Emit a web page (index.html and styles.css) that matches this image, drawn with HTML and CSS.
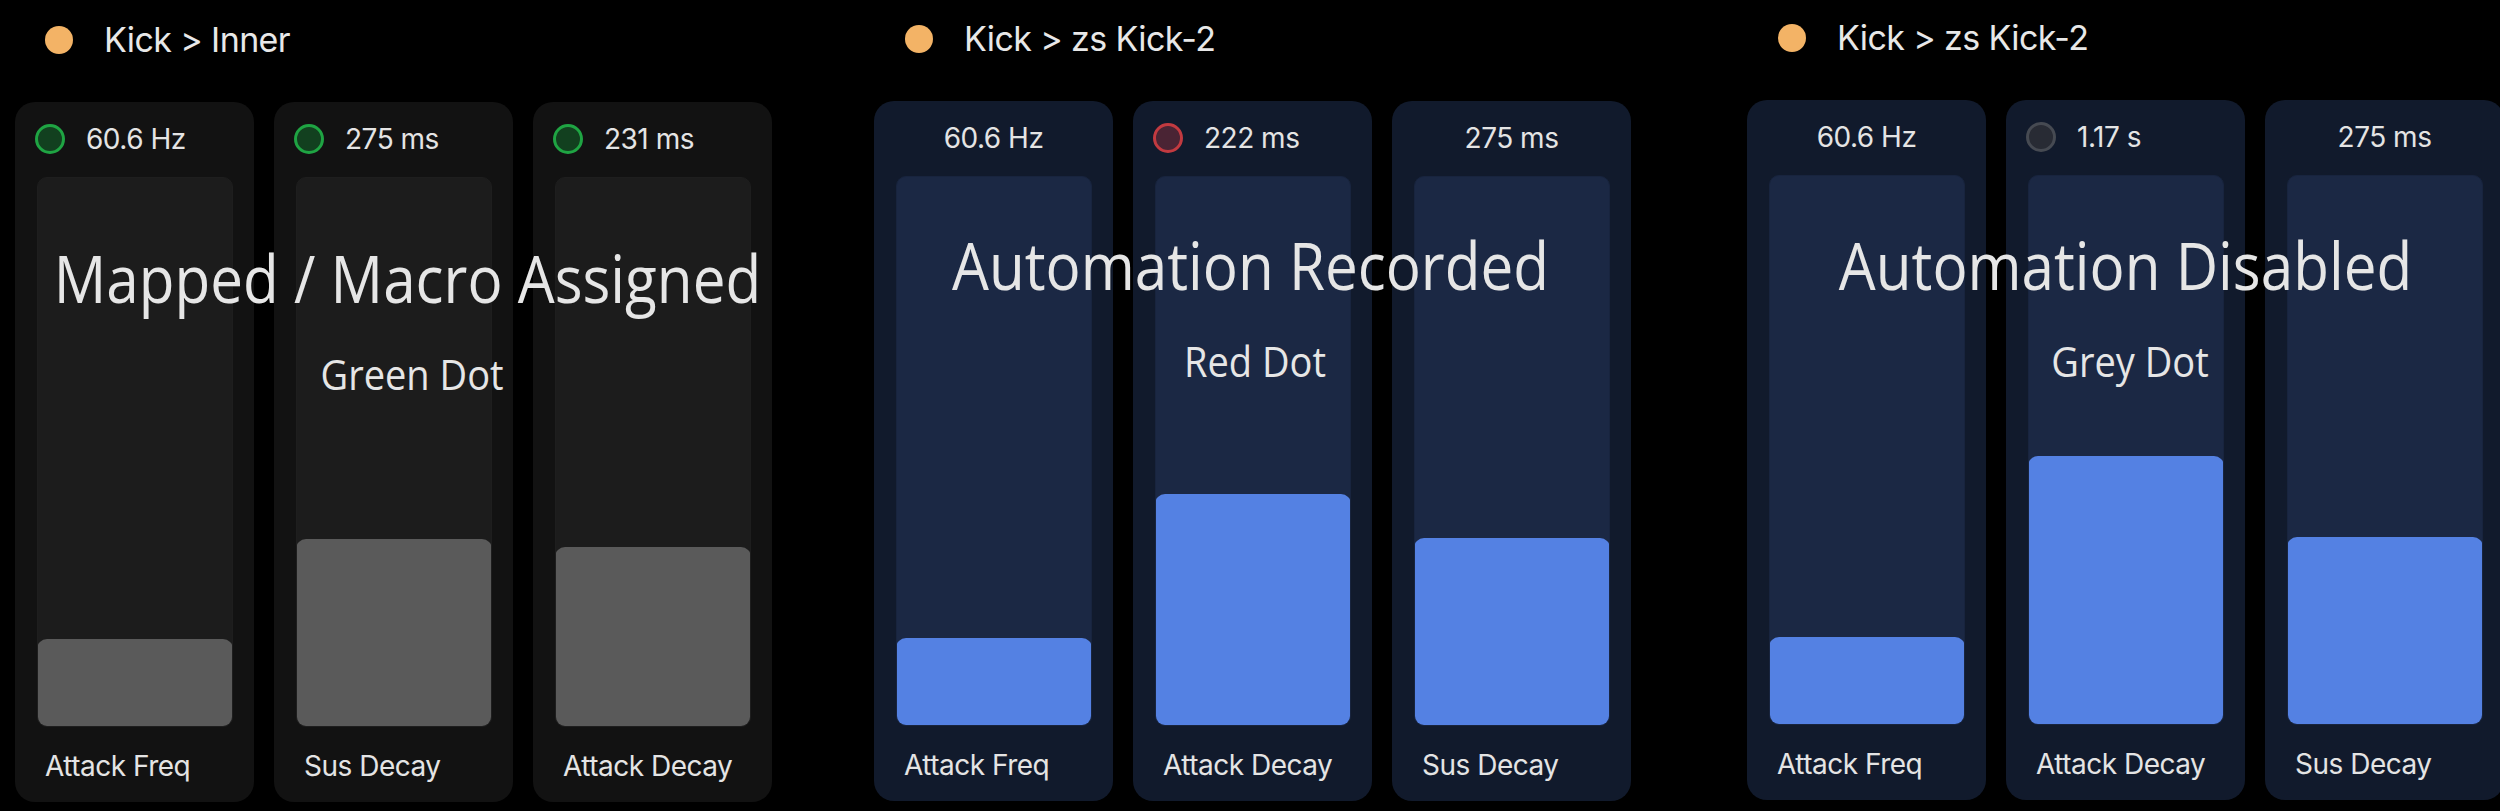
FILE: index.html
```html
<!DOCTYPE html>
<html lang="en">
<head>
<meta charset="utf-8">
<title>Parameter states</title>
<link rel="stylesheet" href="styles.css">
</head>
<body>
<main class="board">
  <section class="group group--g1">
    <header class="head"><span class="head-dot"></span><span class="head-title">Kick &gt; Inner</span></header>
    <div class="cards">
      <div class="card">
        <div class="val"><span class="dot dot--green"></span><span>60.6 Hz</span></div>
        <div class="track"><div class="fill" style="height:88px"></div></div>
        <div class="label">Attack Freq</div>
      </div>
      <div class="card">
        <div class="val"><span class="dot dot--green"></span><span>275 ms</span></div>
        <div class="track"><div class="fill" style="height:188px"></div></div>
        <div class="label">Sus Decay</div>
      </div>
      <div class="card">
        <div class="val"><span class="dot dot--green"></span><span>231 ms</span></div>
        <div class="track"><div class="fill" style="height:180px"></div></div>
        <div class="label">Attack Decay</div>
      </div>
    </div>
    <div class="overlay overlay--g1">
      <div class="big"><span>Mapped / Macro Assigned</span></div>
      <div class="small"><span>Green Dot</span></div>
    </div>
  </section>

  <section class="group group--blue group--g2">
    <header class="head"><span class="head-dot"></span><span class="head-title">Kick &gt; zs Kick-2</span></header>
    <div class="cards">
      <div class="card">
        <div class="val val--center"><span>60.6 Hz</span></div>
        <div class="track"><div class="fill" style="height:88px"></div></div>
        <div class="label">Attack Freq</div>
      </div>
      <div class="card">
        <div class="val"><span class="dot dot--red"></span><span>222 ms</span></div>
        <div class="track"><div class="fill" style="height:232px"></div></div>
        <div class="label">Attack Decay</div>
      </div>
      <div class="card">
        <div class="val val--center"><span>275 ms</span></div>
        <div class="track"><div class="fill" style="height:188px"></div></div>
        <div class="label">Sus Decay</div>
      </div>
    </div>
    <div class="overlay overlay--g2">
      <div class="big"><span>Automation Recorded</span></div>
      <div class="small"><span>Red Dot</span></div>
    </div>
  </section>

  <section class="group group--blue group--g3">
    <header class="head"><span class="head-dot"></span><span class="head-title">Kick &gt; zs Kick-2</span></header>
    <div class="cards">
      <div class="card">
        <div class="val val--center"><span>60.6 Hz</span></div>
        <div class="track"><div class="fill" style="height:88px"></div></div>
        <div class="label">Attack Freq</div>
      </div>
      <div class="card">
        <div class="val"><span class="dot dot--grey"></span><span>1.17 s</span></div>
        <div class="track"><div class="fill" style="height:269px"></div></div>
        <div class="label">Attack Decay</div>
      </div>
      <div class="card">
        <div class="val val--center"><span>275 ms</span></div>
        <div class="track"><div class="fill" style="height:188px"></div></div>
        <div class="label">Sus Decay</div>
      </div>
    </div>
    <div class="overlay overlay--g3">
      <div class="big"><span>Automation Disabled</span></div>
      <div class="small"><span>Grey Dot</span></div>
    </div>
  </section>
</main>
</body>
</html>
```

FILE: styles.css
```css
html, body {
  margin: 0;
  padding: 0;
  background: #000;
}

body {
  width: 2500px;
  height: 811px;
  overflow: hidden;
  font-family: Inter, "Liberation Sans", sans-serif;
  color: #e6e6e6;
}

.board {
  display: flex;
  align-items: flex-start;
  padding-left: 15px;
}

.group {
  position: relative;
  display: flex;
  flex-direction: column;
  flex: none;
}

.group--g1 { padding-top: 2px; }
.group--g2 { margin-left: 102px; padding-top: 1px; }
.group--g3 { margin-left: 116px; }

.head {
  display: flex;
  align-items: center;
  height: 76px;
  padding-left: 31px;
  gap: 31px;
}

.group--g1 .head { padding-left: 30px; }

.head-dot {
  width: 28px;
  height: 28px;
  border-radius: 50%;
  background: #f3b366;
  flex: none;
}

.head-title {
  font-size: 34px;
  line-height: 40px;
  color: #e8e8e8;
  letter-spacing: -0.6px;
}

.cards {
  display: flex;
  gap: 20px;
  margin-top: 24px;
}

.card {
  width: 239px;
  height: 700px;
  box-sizing: border-box;
  border-radius: 20px;
  background: #121212;
  display: flex;
  flex-direction: column;
  padding-top: 22px;
  flex: none;
}

.group--blue .card { background: #111a2c; }

.val {
  height: 30px;
  display: flex;
  align-items: center;
  gap: 21px;
  padding: 0 20px;
  font-size: 28px;
  line-height: 34px;
  letter-spacing: -0.5px;
  color: #e4e4e4;
}

.val--center { justify-content: center; }

.dot {
  width: 30px;
  height: 30px;
  box-sizing: border-box;
  border-radius: 50%;
  border: 3px solid;
  flex: none;
}

.dot--green { background: #12401f; border-color: #1fa443; }
.dot--red { background: #4a2434; border-color: #c23a40; }
.dot--grey { background: #282b34; border-color: #464a52; }

.track {
  margin: 23px 21px 0 22px;
  height: 550px;
  box-sizing: border-box;
  border-radius: 10px;
  background: #1c1c1c;
  border: 1px solid #1e1e1e;
  display: flex;
  flex-direction: column;
  justify-content: flex-end;
  overflow: hidden;
}

.group--blue .track {
  background: #1b2844;
  border-color: #18243e;
}

.fill {
  border-radius: 10px;
  background: #5a5a5a;
  margin: 0 -1px -1px;
}

.group--blue .fill { background: #5481e3; }

.label {
  height: 75px;
  box-sizing: border-box;
  padding: 22px 0 0 30px;
  font-size: 28px;
  line-height: 34px;
  letter-spacing: -0.5px;
  color: #e4e4e4;
}

.overlay {
  position: absolute;
  left: 0;
  right: 0;
  font-family: "Open Sans", "Noto Sans", sans-serif;
  color: #e6e6e6;
  pointer-events: none;
}

.overlay--g1 { top: 244px; left: 28px; }
.overlay--g2 { top: 231px; right: 4px; }
.overlay--g3 { top: 231px; }

.big,
.small {
  display: flex;
  justify-content: center;
  white-space: nowrap;
}

.big {
  font-size: 66px;
  line-height: 66px;
  transform: scaleX(0.885);
}

.small {
  margin-top: 43px;
  padding-left: 10px;
  font-size: 42px;
  line-height: 42px;
  transform: scaleX(0.905);
}
```
